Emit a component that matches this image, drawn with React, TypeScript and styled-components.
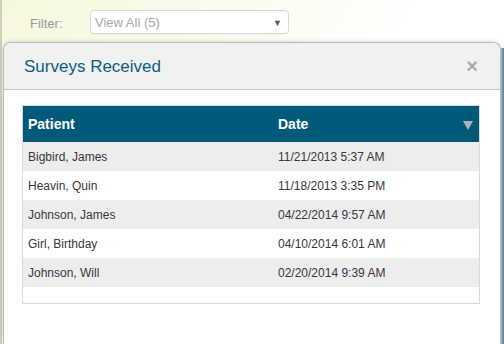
import React from "react";
import styled, { createGlobalStyle } from "styled-components";

const GlobalStyle = createGlobalStyle`
  html, body {
    margin: 0;
    padding: 0;
  }
  body {
    width: 504px;
    height: 344px;
    overflow: hidden;
    font-family: "Liberation Sans", Arial, sans-serif;
    background: linear-gradient(115deg, #f6f8de 0%, #fafbea 30%, #fdfdf6 48%, #ffffff 62%);
  }
`;

const surveys = [
  { patient: "Bigbird, James", date: "11/21/2013 5:37 AM" },
  { patient: "Heavin, Quin", date: "11/18/2013 3:35 PM" },
  { patient: "Johnson, James", date: "04/22/2014 9:57 AM" },
  { patient: "Girl, Birthday", date: "04/10/2014 6:01 AM" },
  { patient: "Johnson, Will", date: "02/20/2014 9:39 AM" },
];

export default function App() {
  return (
    <Page>
      <GlobalStyle />
      <EdgeLine />
      <Main>
        <FilterBar>
          <FilterLabel>Filter:</FilterLabel>
          <Select>
            <span>View All (5)</span>
            <Caret>▼</Caret>
          </Select>
        </FilterBar>
        <ModalRow>
          <Modal>
            <ModalHeader>
              <Title>Surveys Received</Title>
              <Close>×</Close>
            </ModalHeader>
            <ModalBody>
              <Table>
                <HeadRow>
                  <HeadCell>Patient</HeadCell>
                  <HeadCell>Date</HeadCell>
                  <SortArrow />
                </HeadRow>
                {surveys.map((s, i) => (
                  <Row key={s.patient} $odd={i % 2 === 0}>
                    <Cell>{s.patient}</Cell>
                    <Cell>{s.date}</Cell>
                  </Row>
                ))}
                <TableFoot />
              </Table>
            </ModalBody>
          </Modal>
          <BehindStrip />
        </ModalRow>
      </Main>
    </Page>
  );
}

const Page = styled.div`
  display: flex;
  width: 504px;
  height: 344px;
`;

const EdgeLine = styled.div`
  width: 2px;
  background: #cfcfc4;
  flex-shrink: 0;
`;

const Main = styled.div`
  flex: 1;
  display: flex;
  flex-direction: column;
`;

const FilterBar = styled.div`
  height: 42px;
  display: flex;
  align-items: flex-start;
  padding-top: 10px;
  box-sizing: border-box;
`;

const FilterLabel = styled.div`
  width: 88px;
  padding: 2px 0 0 28px;
  box-sizing: border-box;
  font-size: 13px;
  line-height: 24px;
  color: #9a9a9a;
`;

const Select = styled.div`
  width: 199px;
  height: 24px;
  box-sizing: border-box;
  border: 1px solid #d9d9d2;
  border-radius: 4px;
  background: #ffffff;
  box-shadow: 0 1px 1px rgba(0, 0, 0, 0.04);
  display: flex;
  align-items: center;
  justify-content: space-between;
  padding: 1px 6px 0 4px;
  font-size: 13px;
  color: #a8a8a8;
`;

const Caret = styled.span`
  font-size: 9px;
  color: #555;
`;

const ModalRow = styled.div`
  flex: 1;
  display: flex;
  min-height: 0;
`;

const Modal = styled.div`
  margin-left: 1px;
  width: 498px;
  box-sizing: border-box;
  border: 1px solid #b9bbb8;
  border-bottom: none;
  border-radius: 8px 8px 0 0;
  background: #ffffff;
  box-shadow: 0 0 5px rgba(0, 0, 0, 0.18);
  display: flex;
  flex-direction: column;
  overflow: hidden;
`;

const BehindStrip = styled.div`
  flex: 1;
  margin-top: 6px;
  background: linear-gradient(90deg, #a8bac3 0%, #4f7a8f 100%);
`;

const ModalHeader = styled.div`
  height: 47px;
  box-sizing: border-box;
  background: #f0f2f1;
  border-bottom: 1px solid #c6c8c6;
  display: flex;
  align-items: center;
  justify-content: space-between;
  padding: 0 22px 0 20px;
`;

const Title = styled.h3`
  margin: 0;
  font-weight: normal;
  font-size: 17px;
  color: #0c5e80;
  padding-top: 1px;
`;

const Close = styled.span`
  font-size: 20px;
  font-weight: bold;
  color: #acacac;
  line-height: 1;
`;

const ModalBody = styled.div`
  padding: 15px 20px 0 18px;
`;

const Table = styled.div`
  width: 458px;
  box-sizing: border-box;
  border: 1px solid #dadad2;
`;

const HeadRow = styled.div`
  position: relative;
  display: grid;
  grid-template-columns: 250px 1fr;
  height: 36px;
  align-items: center;
  background: #025a7b;
`;

const HeadCell = styled.div`
  padding-left: 5px;
  font-size: 14px;
  font-weight: bold;
  color: #ffffff;
`;

const SortArrow = styled.span`
  position: absolute;
  right: 6px;
  top: 15px;
  width: 0;
  height: 0;
  border-left: 5px solid transparent;
  border-right: 5px solid transparent;
  border-top: 9px solid #a9b4b9;
`;

const Row = styled.div<{ $odd: boolean }>`
  display: grid;
  grid-template-columns: 250px 1fr;
  height: 29px;
  align-items: center;
  background: ${(p) => (p.$odd ? "#ededed" : "#ffffff")};
`;

const Cell = styled.div`
  padding-left: 5px;
  font-size: 12px;
  color: #3a363d;
`;

const TableFoot = styled.div`
  height: 16px;
`;
